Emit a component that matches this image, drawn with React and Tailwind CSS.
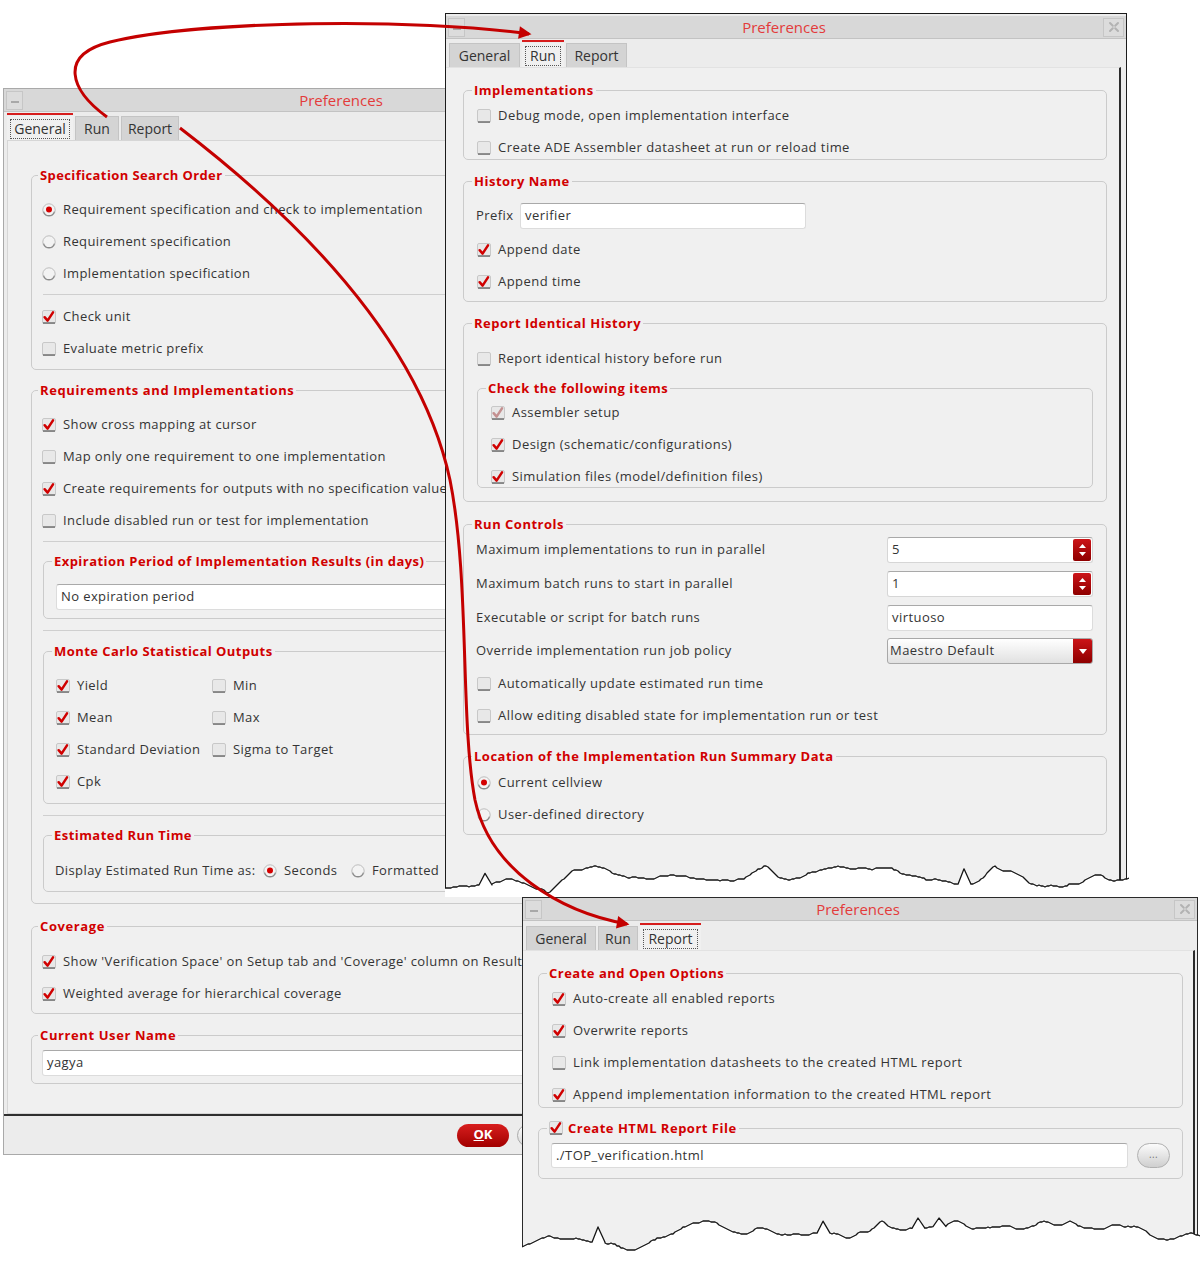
import React from 'react'

// three "Preferences" dialogs laid over each other, with red arrows between the tabs

function Check({ on, dim }) {
  return (
    <svg width="14" height="14" viewBox="0 0 14 14" className="shrink-0">
      <rect x="0.5" y="0.5" width="13" height="13" rx="1.5" fill="#e8e8e8" stroke="#c8c8c8" />
      <line x1="1" y1="13" x2="13" y2="13" stroke="#777" strokeWidth="1.6" />
      {on && (
        <path
          d="M2.6 7.2 L5.6 10.6 L11 2.4"
          fill="none"
          stroke={dim ? '#c49090' : '#d00000'}
          strokeWidth="2.5"
          strokeLinecap="round"
          strokeLinejoin="round"
        />
      )}
    </svg>
  )
}

function Radio({ on }) {
  return (
    <svg width="14" height="14" viewBox="0 0 14 14" className="shrink-0">
      <circle cx="7" cy="7" r="6.2" fill="#f3f3f3" stroke="#bdbdbd" />
      <path d="M1.6 8.6 A5.6 5.6 0 0 0 12.4 8.6" fill="none" stroke="#8a8a8a" strokeWidth="1.2" />
      {on && <circle cx="7" cy="6.6" r="3" fill="#d40000" />}
    </svg>
  )
}

const Row = ({ children, className = '' }) => (
  <div className={`flex h-[20px] items-center gap-[7px] whitespace-nowrap ${className}`}>{children}</div>
)

const CheckRow = ({ on, dim, children, className = '' }) => (
  <Row className={className}>
    <Check on={on} dim={dim} />
    <span>{children}</span>
  </Row>
)

const RadioRow = ({ on, children, className = '' }) => (
  <Row className={className}>
    <Radio on={on} />
    <span>{children}</span>
  </Row>
)

function Group({ title, className = '', legend = 'ml-[8px]', track = 'tracking-[0.5px]', children }) {
  return (
    <fieldset className={`min-w-0 rounded-[5px] border border-[#cbcbcb] ${className}`}>
      <legend className={`${legend} px-[2px] text-[13px] font-bold leading-[18px] text-[#d10000] ${track}`}>{title}</legend>
      {children}
    </fieldset>
  )
}

const Field = ({ children, className = '' }) => (
  <div className={`flex items-center rounded-[3px] border border-[#dcdcdc] border-t-[#a9a9a9] bg-white px-[4px] text-[13px] text-[#333] ${className}`}>
    {children}
  </div>
)

const Sep = ({ className = '' }) => <div className={`h-px bg-[#cfcfcf] ${className}`} />

function Spin({ value }) {
  return (
    <div className="flex h-[26px] w-[206px] rounded-[3px] border border-[#d6d6d6] border-t-[#a9a9a9] bg-white">
      <div className="flex flex-1 items-center px-[4px]">{value}</div>
      <div className="my-[1px] mr-[1px] flex w-[18px] flex-col items-center justify-center gap-[4px] rounded-[2px] bg-linear-to-b from-[#cc1418] to-[#8e0000]">
        <svg width="7" height="4"><path d="M0,4 L3.5,0 L7,4 Z" fill="#fff" /></svg>
        <svg width="7" height="4"><path d="M0,0 L3.5,4 L7,0 Z" fill="#fff" /></svg>
      </div>
    </div>
  )
}

function Combo({ value }) {
  return (
    <div className="flex h-[26px] w-[206px] rounded-[3px] border border-[#a8a8a8] bg-linear-to-b from-white to-[#e1e1e1]">
      <div className="flex flex-1 items-center px-[2px]">{value}</div>
      <div className="flex w-[19px] items-center justify-center rounded-r-[2px] bg-linear-to-b from-[#cc1418] to-[#8e0000]">
        <svg width="8" height="5"><path d="M0,0 L4,5 L8,0 Z" fill="#fff" /></svg>
      </div>
    </div>
  )
}

function TitleBar({ className = '' }) {
  return (
    <div className={`flex h-[23px] shrink-0 items-center border-b border-[#c3c3c3] bg-[#d8d8d8] px-[2px] ${className}`}>
      <div className="flex h-[19px] w-[17px] items-end justify-center border border-[#c6c6c6] bg-[#dcdcdc] pb-[6px]">
        <div className="h-[2px] w-[8px] bg-[#a8a8a8]" />
      </div>
      <div className="flex-1 text-center text-[15px] leading-[23px] text-[#e33b3b]">Preferences</div>
      <div className="flex h-[19px] w-[21px] items-center justify-center border border-[#c6c6c6] bg-[#dcdcdc]">
        <svg width="12" height="12" viewBox="0 0 12 12">
          <path d="M2 2 L4.8 4.8 M7.2 7.2 L10 10 M10 2 L7.2 4.8 M4.8 7.2 L2 10" stroke="#b2b2b2" strokeWidth="2" strokeLinecap="round" />
        </svg>
      </div>
    </div>
  )
}

function Tabs({ active, widths, className = '' }) {
  const names = ['General', 'Run', 'Report']
  return (
    <div className={`flex shrink-0 items-end gap-[2px] pl-[3px] ${className}`}>
      {names.map((n, i) =>
        n === active ? (
          <div key={n} className={`flex flex-col ${widths[i]}`}>
            <div className="h-[2px] bg-[#d61c1c]" />
            <div className="mt-[1px] flex h-[24px] items-center justify-center bg-[#f0f0f0] px-[3px] pt-[1px]">
              <span className="flex h-[20px] w-full items-center justify-center border border-dotted border-[#555] text-[14px] text-[#333]">{n}</span>
            </div>
          </div>
        ) : (
          <div key={n} className={`flex flex-col ${widths[i]}`}>
            <div className="h-[2px]" />
            <div className="mt-[1px] flex h-[24px] items-center justify-center border border-b-0 border-[#c4c4c4] bg-[#d4d4d4] text-[14px] text-[#333]">{n}</div>
          </div>
        )
      )}
    </div>
  )
}

// torn-paper edge: a wandering line with plateaus and the odd sharp peak
function jagPoints(w, seed, lo, hi) {
  let s = seed
  const rnd = () => {
    s = (s * 9301 + 49297) % 233280
    return s / 233280
  }
  let y = hi - 6
  let v = 0
  const pts = []
  let x = 0
  while (x <= w) {
    const r = rnd()
    if (r > 0.988) {
      const h = 8 + 10 * rnd()
      pts.push([x, y])
      pts.push([x + 6, Math.max(lo, y - h)])
      x += 13
      pts.push([Math.min(x, w), y])
      continue
    }
    v += (rnd() - 0.5) * 1.6
    v *= 0.86
    y += v
    if (y < lo + 3) { y = lo + 3; v = Math.abs(v) }
    if (y > hi) { y = hi; v = -Math.abs(v) }
    pts.push([x, Math.round(y)])
    x += 2
  }
  pts.push([w, y])
  return pts
}

function TornEdge({ w, h, seed, lo, hi, className }) {
  const line = jagPoints(w, seed, lo, hi)
    .map((p, i) => `${i ? 'L' : 'M'}${p[0].toFixed(1)},${p[1].toFixed(1)}`)
    .join(' ')
  return (
    <svg width={w} height={h} className={className}>
      <path d={`${line} L${w},${h} L0,${h} Z`} fill="#fff" />
      <path d={line} fill="none" stroke="#151515" strokeWidth="1.3" strokeLinejoin="round" />
    </svg>
  )
}

function GeneralWindow() {
  return (
    <div className="absolute left-[3px] top-[88px] flex h-[1067px] w-[680px] flex-col border border-[#a9a9a9] bg-[#ececec]">
      <TitleBar />
      <Tabs active="General" widths={['w-[66px]', 'w-[44px]', 'w-[58px]']} className="h-[28px]" />
      <div className="mx-[3px] h-[974px] shrink-0 border border-[#d6d6d6] bg-[#f0f0f0] pl-[23px] pr-[20px] pt-[25px] text-[13px] tracking-[0.4px] text-[#343434]">
        <Group title="Specification Search Order" legend="ml-[6px]" track="tracking-[0.4px]" className="pb-[10px] pt-[16px]">
          <div className="flex flex-col gap-[12px] pl-[10px]">
            <RadioRow on>Requirement specification and check to implementation</RadioRow>
            <RadioRow>Requirement specification</RadioRow>
            <RadioRow>Implementation specification</RadioRow>
          </div>
          <Sep className="ml-[11px] mt-[10px]" />
          <div className="mt-[12px] flex flex-col gap-[12px] pl-[10px]">
            <CheckRow on>Check unit</CheckRow>
            <CheckRow>Evaluate metric prefix</CheckRow>
          </div>
        </Group>

        <Group title="Requirements and Implementations" legend="ml-[6px]" track="tracking-[0.6px]" className="mt-[11px] pb-[11px] pt-[16px]">
          <div className="flex flex-col gap-[12px] pl-[10px]">
            <CheckRow on>Show cross mapping at cursor</CheckRow>
            <CheckRow>Map only one requirement to one implementation</CheckRow>
            <CheckRow on>Create requirements for outputs with no specification value</CheckRow>
            <CheckRow>Include disabled run or test for implementation</CheckRow>
          </div>
          <Sep className="ml-[11px] mt-[10px]" />
          <Group title="Expiration Period of Implementation Results (in days)" track="tracking-[0.45px]" className="ml-[11px] mt-[10px] pb-[8px] pt-[14px]">
            <Field className="ml-[12px] h-[26px]">No expiration period</Field>
          </Group>
          <Sep className="ml-[11px] mt-[11px]" />
          <Group title="Monte Carlo Statistical Outputs" track="tracking-[0.45px]" className="ml-[11px] mt-[11px] pb-[11px] pt-[16px]">
            <div className="grid grid-cols-[156px_1fr] gap-y-[12px] pl-[12px]">
              <CheckRow on>Yield</CheckRow>
              <CheckRow>Min</CheckRow>
              <CheckRow on>Mean</CheckRow>
              <CheckRow>Max</CheckRow>
              <CheckRow on>Standard Deviation</CheckRow>
              <CheckRow>Sigma to Target</CheckRow>
              <CheckRow on>Cpk</CheckRow>
            </div>
          </Group>
          <Sep className="ml-[11px] mt-[11px]" />
          <Group title="Estimated Run Time" track="tracking-[0.45px]" className="ml-[11px] mt-[10px] pb-[10px] pt-[17px]">
            <Row className="pl-[11px]">
              <span className="w-[201px]">Display Estimated Run Time as:</span>
              <Radio on />
              <span className="w-[60px]">Seconds</span>
              <Radio />
              <span>Formatted</span>
            </Row>
          </Group>
        </Group>

        <Group title="Coverage" legend="ml-[6px]" track="tracking-[0.6px]" className="mt-[13px] pb-[9px] pt-[17px]">
          <div className="flex flex-col gap-[12px] pl-[10px]">
            <CheckRow on>Show 'Verification Space' on Setup tab and 'Coverage' column on Results tab</CheckRow>
            <CheckRow on>Weighted average for hierarchical coverage</CheckRow>
          </div>
        </Group>

        <Group title="Current User Name" legend="ml-[6px]" track="tracking-[0.6px]" className="mt-[12px] pb-[7px] pt-[6px]">
          <Field className="ml-[10px] mr-[11px] h-[26px]">yagya</Field>
        </Group>
      </div>
      <div className="flex flex-1 items-center gap-[8px] border-t-2 border-[#2f2f2f] pl-[453px]">
        <div className="flex h-[23px] w-[52px] items-center justify-center rounded-full bg-linear-to-b from-[#d81d1d] to-[#a20000] text-[13px] font-bold text-white">
          <span className="underline">O</span>K
        </div>
        <div className="flex h-[23px] w-[64px] items-center justify-center rounded-full border border-[#aaa] bg-linear-to-b from-white to-[#d6d6d6] text-[13px]">Cancel</div>
      </div>
    </div>
  )
}

function RunWindow() {
  return (
    <div className="absolute left-[445px] top-[13px] flex h-[884px] w-[682px] flex-col border border-[#1c1c1c] bg-[#ececec]">
      <TitleBar className="mt-[2px]" />
      <Tabs active="Run" widths={['w-[71px]', 'w-[42px]', 'w-[61px]']} className="h-[28px]" />
      <div className="mr-[5px] flex-1 border-r-2 border-t border-[#2b2b2b] border-t-[#e2e2e2] bg-[#f0f0f0] pl-[17px] pr-[12px] pt-[13px] text-[13px] tracking-[0.45px] text-[#343434]">
        <Group title="Implementations" className="pb-[1px] pt-[7px]">
          <div className="flex flex-col gap-[12px] pl-[13px]">
            <CheckRow>Debug mode, open implementation interface</CheckRow>
            <CheckRow>Create ADE Assembler datasheet at run or reload time</CheckRow>
          </div>
        </Group>

        <Group title="History Name" className="mt-[12px] pb-[9px] pt-[13px]">
          <div className="flex items-center pl-[12px]">
            <span className="w-[44px]">Prefix</span>
            <Field className="h-[26px] w-[286px]">verifier</Field>
          </div>
          <div className="mt-[11px] flex flex-col gap-[12px] pl-[13px]">
            <CheckRow on>Append date</CheckRow>
            <CheckRow on>Append time</CheckRow>
          </div>
        </Group>

        <Group title="Report Identical History" className="mt-[12px] pb-[13px] pt-[17px]">
          <CheckRow className="pl-[13px]">Report identical history before run</CheckRow>
          <Group title="Check the following items" className="mx-[13px] mt-[10px] pt-[6px]">
            <div className="flex flex-col gap-[12px] pl-[13px]">
              <CheckRow on dim>Assembler setup</CheckRow>
              <CheckRow on>Design (schematic/configurations)</CheckRow>
              <CheckRow on>Simulation files (model/definition files)</CheckRow>
            </div>
          </Group>
        </Group>

        <Group title="Run Controls" className="mt-[13px] pb-[8px] pt-[4px]">
          <div className="flex flex-col gap-[7px] pl-[12px] pr-[13px]">
            <div className="flex items-center justify-between">
              <span>Maximum implementations to run in parallel</span>
              <Spin value="5" />
            </div>
            <div className="mt-[1px] flex items-center justify-between">
              <span>Maximum batch runs to start in parallel</span>
              <Spin value="1" />
            </div>
            <div className="mt-[1px] flex items-center justify-between">
              <span>Executable or script for batch runs</span>
              <Field className="h-[26px] w-[206px]">virtuoso</Field>
            </div>
            <div className="flex items-center justify-between">
              <span>Override implementation run job policy</span>
              <Combo value="Maestro Default" />
            </div>
          </div>
          <div className="mt-[10px] flex flex-col gap-[12px] pl-[13px]">
            <CheckRow>Automatically update estimated run time</CheckRow>
            <CheckRow>Allow editing disabled state for implementation run or test</CheckRow>
          </div>
        </Group>

        <Group title="Location of the Implementation Run Summary Data" className="mt-[12px] pb-[9px] pt-[8px]">
          <div className="flex flex-col gap-[12px] pl-[13px]">
            <RadioRow on>Current cellview</RadioRow>
            <RadioRow>User-defined directory</RadioRow>
          </div>
        </Group>
      </div>
      <TornEdge w={684} h={40} seed={17} lo={6} hi={36} className="absolute left-[-1px] top-[843px]" />
    </div>
  )
}

function ReportWindow() {
  return (
    <div className="absolute left-[522px] top-[897px] flex h-[368px] w-[676px] flex-col border border-[#2a2a2a] bg-[#ececec]">
      <TitleBar />
      <Tabs active="Report" widths={['w-[70px]', 'w-[40px]', 'w-[61px]']} className="h-[29px]" />
      <div className="mr-[2px] flex-1 border-r-2 border-t border-[#2b2b2b] border-t-[#e2e2e2] bg-[#f0f0f0] pl-[15px] pr-[10px] pt-[13px] text-[13px] tracking-[0.45px] text-[#343434]">
        <Group title="Create and Open Options" className="pb-[2px] pt-[7px]">
          <div className="flex flex-col gap-[12px] pl-[13px]">
            <CheckRow on>Auto-create all enabled reports</CheckRow>
            <CheckRow on>Overwrite reports</CheckRow>
            <CheckRow>Link implementation datasheets to the created HTML report</CheckRow>
            <CheckRow on>Append implementation information to the created HTML report</CheckRow>
          </div>
        </Group>
        <Group
          title={
            <span className="flex items-center gap-[5px]">
              <Check on />
              Create HTML Report File
            </span>
          }
          className="mt-[11px] pb-[10px] pt-[6px]"
        >
          <div className="flex items-center gap-[9px] pl-[12px] pr-[12px]">
            <Field className="h-[25px] flex-1">./TOP_verification.html</Field>
            <div className="flex h-[25px] w-[33px] items-center justify-center rounded-full border border-[#b0b0b0] bg-linear-to-b from-[#fbfbfb] to-[#cfcfcf] pb-[3px] text-[10px] text-[#777]">...</div>
          </div>
        </Group>
      </div>
      <TornEdge w={678} h={56} seed={53} lo={8} hi={44} className="absolute left-[-1px] top-[312px]" />
    </div>
  )
}

export default function App() {
  return (
    <div className="relative h-[1265px] w-[1201px] overflow-hidden bg-white font-['Open_Sans',sans-serif]">
      <GeneralWindow />
      <RunWindow />
      <ReportWindow />
      <svg className="pointer-events-none absolute left-0 top-0" width="1201" height="1265">
        <defs>
          <marker id="head" viewBox="0 0 10 10" refX="8" refY="5" markerWidth="5.5" markerHeight="4.2" orient="auto">
            <path d="M0,0 L10,5 L0,10 Z" fill="#c40000" />
          </marker>
        </defs>
        <path d="M107,117 C70,90 58,55 110,42 C200,20 420,18 529,34" fill="none" stroke="#c40000" strokeWidth="3" markerEnd="url(#head)" />
        <path
          d="M180,128 C300,220 420,340 450,480 C470,580 460,720 475,800 C490,870 560,912 627,924"
          fill="none"
          stroke="#c40000"
          strokeWidth="3"
          markerEnd="url(#head)"
        />
      </svg>
    </div>
  )
}
